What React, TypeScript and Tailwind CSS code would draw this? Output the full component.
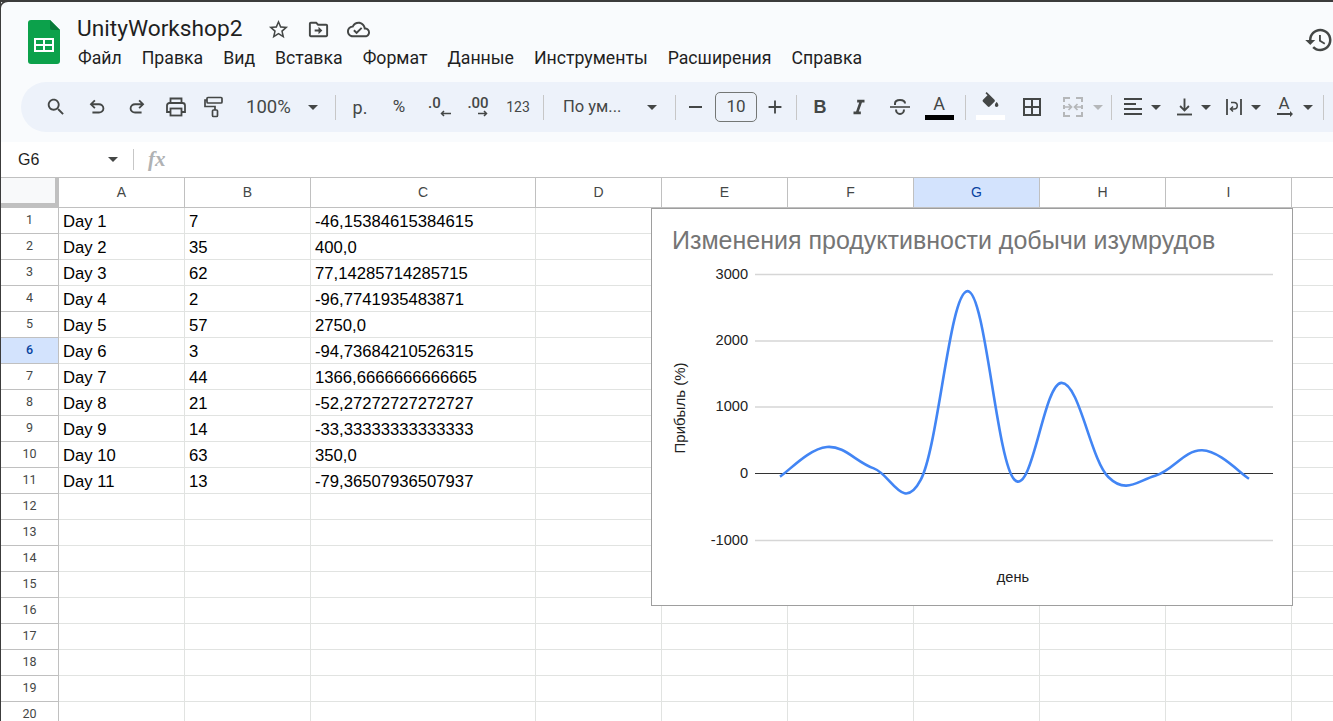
import type { ReactNode } from 'react'

const COLUMNS = ['A', 'B', 'C', 'D', 'E', 'F', 'G', 'H', 'I', '']

const ROWS = [
  ['Day 1', '7', '-46,15384615384615'],
  ['Day 2', '35', '400,0'],
  ['Day 3', '62', '77,14285714285715'],
  ['Day 4', '2', '-96,7741935483871'],
  ['Day 5', '57', '2750,0'],
  ['Day 6', '3', '-94,73684210526315'],
  ['Day 7', '44', '1366,6666666666665'],
  ['Day 8', '21', '-52,27272727272727'],
  ['Day 9', '14', '-33,33333333333333'],
  ['Day 10', '63', '350,0'],
  ['Day 11', '13', '-79,36507936507937'],
]

const VALUES = [-46.15, 400, 77.14, -96.77, 2750, -94.74, 1366.67, -52.27, -33.33, 350, -79.37]

const MENU = ['Файл', 'Правка', 'Вид', 'Вставка', 'Формат', 'Данные', 'Инструменты', 'Расширения', 'Справка']

// chart coordinates are relative to the chart box
const TICKS = [
  { label: '3000', y: 65.5 },
  { label: '2000', y: 132 },
  { label: '1000', y: 198 },
  { label: '-1000', y: 331.5 },
]

function smoothPath() {
  const pts = VALUES.map((v, i) => [128 + i * 46.9, 264.5 - v * 0.0663])
  const k = 0.19
  let d = `M${pts[0][0]} ${pts[0][1]}`
  for (let i = 0; i < pts.length - 1; i++) {
    const prev = pts[i - 1] ?? pts[i]
    const a = pts[i]
    const b = pts[i + 1]
    const next = pts[i + 2] ?? b
    const c1x = a[0] + (b[0] - prev[0]) * k
    const c1y = a[1] + (b[1] - prev[1]) * k
    const c2x = b[0] - (next[0] - a[0]) * k
    const c2y = b[1] - (next[1] - a[1]) * k
    d += ` C${c1x} ${c1y} ${c2x} ${c2y} ${b[0]} ${b[1]}`
  }
  return d
}

function Icon({ d, size = 22, className = '' }: { d: string; size?: number; className?: string }) {
  return (
    <svg width={size} height={size} viewBox="0 0 24 24" fill="#444746" className={className}>
      <path d={d} />
    </svg>
  )
}

function Caret({ color = 'border-t-[#444746]' }: { color?: string }) {
  return <div className={`w-0 h-0 border-x-[5px] border-x-transparent border-t-[5px] ${color}`} />
}

function Slot({ className, children }: { className: string; children?: ReactNode }) {
  return <div className={`flex items-center justify-center shrink-0 h-full ${className}`}>{children}</div>
}

function Sep({ className }: { className: string }) {
  return (
    <Slot className={className}>
      <div className="w-px h-[25px] bg-[#c7c7c7]" />
    </Slot>
  )
}

function Toolbar() {
  return (
    <div className="ml-[21px] mt-[82px] h-[50px] rounded-l-[25px] bg-[#edf2fa] flex items-center pl-[14px] text-[#444746] font-['Roboto',sans-serif]">
      <Slot className="w-[41px]">
        <Icon d="M15.5 14h-.79l-.28-.27C15.41 12.59 16 11.11 16 9.5 16 5.91 13.09 3 9.5 3S3 5.91 3 9.5 5.91 16 9.5 16c1.61 0 3.09-.59 4.23-1.57l.27.28v.79l5 4.99L20.49 19l-4.99-5zm-6 0C7.01 14 5 11.99 5 9.5S7.01 5 9.5 5 14 7.01 14 9.5 11.99 14 9.5 14z" />
      </Slot>
      <Slot className="w-[41px]">
        <Icon d="M7 19v-2h7.1q1.57 0 2.73-1 1.17-1 1.17-2.5T16.83 11q-1.16-1-2.73-1H7.8l2.6 2.6L9 14 4 9l5-5 1.4 1.4L7.8 8h6.3q2.43 0 4.16 1.57Q20 11.15 20 13.5t-1.74 3.93Q16.53 19 14.1 19H7z" />
      </Slot>
      <Slot className="w-[39px]">
        <Icon className="-scale-x-100" d="M7 19v-2h7.1q1.57 0 2.73-1 1.17-1 1.17-2.5T16.83 11q-1.16-1-2.73-1H7.8l2.6 2.6L9 14 4 9l5-5 1.4 1.4L7.8 8h6.3q2.43 0 4.16 1.57Q20 11.15 20 13.5t-1.74 3.93Q16.53 19 14.1 19H7z" />
      </Slot>
      <Slot className="w-[39px]">
        <svg width="22" height="22" viewBox="0 0 22 22" fill="none" stroke="#444746" strokeWidth="1.8">
          <path d="M5.5 7V2.5h11V7" />
          <path d="M5.5 16H2V9.5A2.5 2.5 0 0 1 4.5 7h13A2.5 2.5 0 0 1 20 9.5V16h-3.5" />
          <rect x="5.5" y="12.5" width="11" height="7" />
        </svg>
      </Slot>
      <Slot className="w-[38px]">
        <svg width="20" height="22" viewBox="0 0 20 22" fill="none" stroke="#444746" strokeWidth="1.7">
          <rect x="3" y="1.5" width="15" height="5.5" rx="1" />
          <path d="M3 4H1v6.5h10V14" />
          <rect x="8.5" y="14" width="5" height="6.5" rx="1" />
        </svg>
      </Slot>
      <Slot className="w-[68px] !justify-start pl-[13px] pt-[2px] text-[18.5px]">100%</Slot>
      <Slot className="w-[24px]">
        <Caret />
      </Slot>
      <Sep className="w-[20px]" />
      <Slot className="w-[30px] text-[18px]">р.</Slot>
      <Slot className="w-[48px] text-[17px]">%</Slot>
      <Slot className="w-[33px]">
        <div className="flex flex-col">
          <span className="text-[15px] font-medium leading-[13px]">.0</span>
          <svg width="11" height="7" viewBox="0 0 11 7" fill="none" stroke="#444746" strokeWidth="1.5" className="ml-[12px]">
            <path d="M11 3.5H1.5M4 1 1.5 3.5 4 6" />
          </svg>
        </div>
      </Slot>
      <Slot className="w-[44px]">
        <div className="flex flex-col">
          <span className="text-[15px] font-medium leading-[13px]">.00</span>
          <svg width="10" height="7" viewBox="0 0 10 7" fill="none" stroke="#444746" strokeWidth="1.5" className="ml-[11px]">
            <path d="M0 3.5h8.5M6 1l2.5 2.5L6 6" />
          </svg>
        </div>
      </Slot>
      <Slot className="w-[36px] text-[14px]">123</Slot>
      <Sep className="w-[14px]" />
      <Slot className="w-[86px] !justify-start pl-[13px] text-[16.5px]">По ум...</Slot>
      <Slot className="w-[32px]">
        <Caret />
      </Slot>
      <Sep className="w-[14px]" />
      <Slot className="w-[26px]">
        <div className="w-[13px] h-[2px] bg-[#444746]" />
      </Slot>
      <Slot className="w-[56px]">
        <div className="w-[42px] h-[30px] rounded-[5px] border border-[#747775] flex items-center justify-center text-[17px]">10</div>
      </Slot>
      <Slot className="w-[22px]">
        <Icon d="M19 13h-6v6h-2v-6H5v-2h6V5h2v6h6v2z" />
      </Slot>
      <Sep className="w-[20px]" />
      <Slot className="w-[28px] text-[18px] font-bold font-['Liberation_Sans',sans-serif]">B</Slot>
      <Slot className="w-[50px]">
        <Icon d="M10 4v3h2.21l-3.42 10H6v3h8v-3h-2.21l3.42-10H18V4z" />
      </Slot>
      <Slot className="w-[32px]">
        <svg width="22" height="22" viewBox="0 0 22 22" fill="none" stroke="#444746" strokeWidth="2">
          <path d="M1 11h20" strokeWidth="1.6" />
          <path d="M6 9V7.5C6 5.5 8 4 11 4s5 1.5 5 3.5" />
          <path d="M7 13.5C7 16 8.8 18 11 18s4-2 4-4.5" />
        </svg>
      </Slot>
      <Slot className="w-[46px] relative">
        <span className="text-[18px] -mt-[8px] font-['Roboto',sans-serif]">A</span>
        <div className="absolute left-[9px] top-[33px] w-[29px] h-[5px] bg-black" />
      </Slot>
      <Sep className="w-[6px]" />
      <Slot className="w-[44px] relative">
        <Icon size={21} className="-mt-[10px]" d="M16.56 8.94L7.62 0 6.21 1.41l2.38 2.38-5.15 5.15c-.59.59-.59 1.54 0 2.12l5.5 5.5c.29.29.68.44 1.06.44s.77-.15 1.06-.44l5.5-5.5c.59-.58.59-1.53 0-2.12zM19 11.5s-2 2.17-2 3.5c0 1.1.9 2 2 2s2-.9 2-2c0-1.33-2-3.5-2-3.5z" />
        <div className="absolute left-[8px] top-[33px] w-[29px] h-[5px] bg-white" />
      </Slot>
      <Slot className="w-[40px]">
        <svg width="20" height="20" viewBox="0 0 20 20" fill="none" stroke="#444746" strokeWidth="2">
          <rect x="2" y="2" width="16" height="16" />
          <path d="M10 2v16M2 10h16" />
        </svg>
      </Slot>
      <Slot className="w-[42px]">
        <svg width="20" height="20" viewBox="0 0 20 20" fill="none" stroke="#b5b7b9" strokeWidth="2">
          <path d="M7 1H1v4M1 8v4M1 15v4h6M13 1h6v4M19 8v4M19 15v4h-6" />
          <path d="M2 10h6M5.5 7 8.5 10l-3 3M18 10h-6M14.5 7l-3 3 3 3" strokeWidth="1.7" />
        </svg>
      </Slot>
      <Slot className="w-[8px]">
        <Caret color="border-t-[#b5b7b9]" />
      </Slot>
      <Sep className="w-[18px]" />
      <Slot className="w-[26px]">
        <svg width="18" height="20" viewBox="0 0 18 20" fill="#444746">
          <rect y="1" width="18" height="2" />
          <rect y="6" width="12" height="2" />
          <rect y="11" width="18" height="2" />
          <rect y="16" width="18" height="2" />
        </svg>
      </Slot>
      <Slot className="w-[20px]">
        <Caret />
      </Slot>
      <Slot className="w-[6px]" />
      <Slot className="w-[24px]">
        <svg width="15" height="20" viewBox="0 0 16 20" fill="#444746">
          <path d="M7 1h2v10.2l3-3 1.4 1.4L8 15 2.6 9.6 4 8.2l3 3z" />
          <rect y="17" width="16" height="2" />
        </svg>
      </Slot>
      <Slot className="w-[20px]">
        <Caret />
      </Slot>
      <Slot className="w-[6px]" />
      <Slot className="w-[24px]">
        <svg width="16" height="16" viewBox="0 0 16 16" fill="none" stroke="#444746" strokeWidth="1.8">
          <path d="M1 0v16M15 0v16" />
          <path d="M5 3.5h3a3 3 0 0 1 0 6.5H5M7 7.5 4.5 10 7 12.5" strokeWidth="1.5" />
        </svg>
      </Slot>
      <Slot className="w-[20px]">
        <Caret />
      </Slot>
      <Slot className="w-[6px]" />
      <Slot className="w-[26px] relative">
        <span className="text-[17px] -mt-[7px] -ml-[2px]">A</span>
        <svg width="16" height="6" viewBox="0 0 16 6" fill="#444746" className="absolute left-[5px] top-[29px]">
          <path d="M0 2h13V0l3 3-3 3V4H0z" />
        </svg>
      </Slot>
      <Slot className="w-[20px]">
        <Caret />
      </Slot>
      <Sep className="w-[10px]" />
    </div>
  )
}

function Chart() {
  return (
    <div className="absolute left-[650px] top-[30px] w-[642px] h-[398px] bg-white border border-[#9e9e9e]">
      <svg width="640" height="396" viewBox="0 0 640 396" className="block font-['Liberation_Sans',sans-serif]">
        <text x="20" y="40" fontSize="25" fill="#757575">Изменения продуктивности добычи изумрудов</text>
        {TICKS.map((t) => (
          <g key={t.label}>
            <line x1="103" x2="621" y1={t.y} y2={t.y} stroke="#d6d6d6" strokeWidth="1.4" />
            <text x="96" y={t.y + 4} fontSize="14.6" fill="#222" textAnchor="end">{t.label}</text>
          </g>
        ))}
        <text x="96" y="269" fontSize="14.6" fill="#222" textAnchor="end">0</text>
        <line x1="103" x2="621" y1="264.5" y2="264.5" stroke="#333" strokeWidth="1.2" />
        <path d={smoothPath()} fill="none" stroke="#4285f4" strokeWidth="2.6" />
        <text x="361" y="373" fontSize="14.6" fill="#222" textAnchor="middle">день</text>
        <text transform="translate(33 199) rotate(-90)" fontSize="15" fill="#222" textAnchor="middle">Прибыль (%)</text>
      </svg>
    </div>
  )
}

function Sheet() {
  const widths = 'grid-cols-[58px_126px_126px_225px_126px_126px_126px_126px_126px_126px_42px]'
  return (
    <div className="relative flex-1 overflow-hidden font-['Liberation_Sans',sans-serif]">
      <div className={`grid ${widths} grid-rows-[30px_repeat(20,26px)]`}>
        <div className="relative bg-[#f8f9fa] border-r-[4px] border-b-[5px] border-[#c0c0c0]" />
        {COLUMNS.map((c) => (
          <div
            key={c || 'rest'}
            className={`flex items-center justify-center border-r border-b border-[#c0c0c0] text-[14px] pb-px ${c === 'G' ? 'bg-[#d3e3fd] text-[#0842a0]' : 'text-[#444746]'}`}
          >
            {c}
          </div>
        ))}
        {Array.from({ length: 20 }, (_, r) => (
          <div key={r} className="contents">
            <div
              className={`flex items-start justify-center pt-[3px] border-r border-b border-[#c0c0c0] text-[12.5px] font-['Roboto',sans-serif] ${r === 5 ? 'bg-[#d3e3fd] text-[#0842a0] font-medium' : 'text-[#444746]'}`}
            >
              {r + 1}
            </div>
            {COLUMNS.map((c, i) => (
              <div key={c || 'rest'} className="border-r border-b border-[#e1e3e1] px-[4px] text-[16.67px] leading-[27px] text-black overflow-hidden whitespace-nowrap">
                {ROWS[r]?.[i]}
              </div>
            ))}
          </div>
        ))}
      </div>
      <Chart />
    </div>
  )
}

export default function App() {
  return (
    <div className="w-[1333px] h-[721px] overflow-hidden flex flex-col bg-white border-l border-[#3c3c3c]">
      <div className="-ml-px relative h-[142px] bg-[#f9fbfd] border-t-2 border-[#3c3c3c] shrink-0">
        <div className="absolute inset-0 -top-[2px] h-[141px] flex flex-col">
          {/* шапка документа */}
          <div className="relative h-0">
            <div className="flex items-start h-0">
              <svg width="32" height="44" viewBox="0 0 32 44" className="ml-[28px] mt-[20px] shrink-0">
                <path d="M3 0h19l10 10v31a3 3 0 0 1-3 3H3a3 3 0 0 1-3-3V3a3 3 0 0 1 3-3z" fill="#0ca14b" />
                <path d="M22 0l10 10h-8a2 2 0 0 1-2-2z" fill="#0a7a3a" />
                <path d="M6 18h20v14H6zm2 2v4h7v-4zm9 0v4h7v-4zm-9 6v4h7v-4zm9 0v4h7v-4z" fill="#fff" fillRule="evenodd" />
              </svg>
              <div className="ml-[17px] mt-[14px] flex flex-col font-['Roboto',sans-serif]">
                <div className="flex items-center h-[30px]">
                  <span className="text-[22.7px] text-[#1f1f1f] w-[190px]">UnityWorkshop2</span>
                  <Icon size={23} d="M22 9.24l-7.19-.62L12 2 9.19 8.63 2 9.24l5.46 4.73L5.82 21 12 17.27 18.18 21l-1.63-7.03L22 9.24zM12 15.4l-3.76 2.27 1-4.28-3.32-2.88 4.38-.38L12 6.1l1.71 4.04 4.38.38-3.32 2.88 1 4.28L12 15.4z" />
                  <Icon size={23} className="ml-[17px]" d="M20 6h-8l-2-2H4c-1.1 0-2 .9-2 2v12c0 1.1.9 2 2 2h16c1.1 0 2-.9 2-2V8c0-1.1-.9-2-2-2zm0 12H4V6h5.17l2 2H20v10zm-8-4H8v-2h4V9l4 4-4 4v-3z" />
                  <Icon size={23} className="ml-[17px]" d="M19.35 10.04C18.67 6.59 15.64 4 12 4 9.11 4 6.6 5.64 5.35 8.04 2.34 8.36 0 10.91 0 14c0 3.31 2.69 6 6 6h13c2.76 0 5-2.24 5-5 0-2.64-2.05-4.78-4.65-4.96zM19 18H6c-2.21 0-4-1.79-4-4 0-2.05 1.53-3.76 3.56-3.97l1.07-.11.5-.95C8.08 7.14 9.94 6 12 6c2.62 0 4.88 1.86 5.39 4.43l.3 1.5 1.53.11c1.56.1 2.78 1.41 2.78 2.96 0 1.65-1.35 3-3 3zm-9-3.82l-2.09-2.09L6.5 13.5 10 17l6.01-6.01-1.41-1.41z" />
                </div>
                <div className="flex gap-[20px] ml-px mt-[2px] text-[17.7px] leading-[24px] text-[#1f1f1f]">
                  {MENU.map((m) => (
                    <span key={m}>{m}</span>
                  ))}
                </div>
              </div>
              <div className="ml-auto mt-[25px] -mr-[1px]">
                <Icon size={30} d="M13 3c-4.97 0-9 4.03-9 9H1l3.89 3.89.07.14L9 12H6c0-3.87 3.13-7 7-7s7 3.13 7 7-3.13 7-7 7c-1.93 0-3.68-.79-4.94-2.06l-1.42 1.42C8.27 19.99 10.51 21 13 21c4.97 0 9-4.03 9-9s-4.03-9-9-9zm-1 5v5l4.28 2.54.72-1.21-3.5-2.08V8H12z" />
              </div>
            </div>
          </div>
          <Toolbar />
        </div>
        <div className="absolute -top-[2px] left-0 w-[8px] h-[8px] bg-[#f9fbfd] rounded-tl-[8px] border-t-2 border-l border-[#3c3c3c]" />
      </div>
      {/* строка формул */}
      <div className="h-[36px] shrink-0 bg-white border-b border-[#c0c0c0] flex items-center font-['Liberation_Sans',sans-serif]">
        <span className="ml-[17px] w-[90px] text-[16px] text-[#1f1f1f]">G6</span>
        <Caret />
        <div className="ml-[15px] w-px h-[21px] bg-[#c7c7c7]" />
        <span className="ml-[14px] text-[21px] italic font-bold text-[#b0b2b4] font-['Liberation_Serif',serif]">fx</span>
      </div>
      <Sheet />
    </div>
  )
}
